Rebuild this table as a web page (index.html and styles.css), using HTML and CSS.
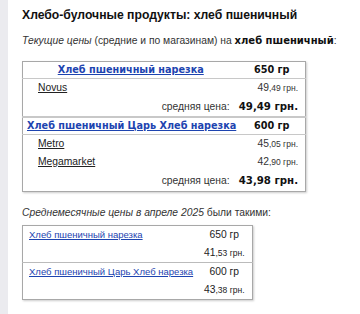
FILE: index.html
```html
<!DOCTYPE html>
<html lang="ru">
<head>
    <meta charset="UTF-8">
    <meta name="viewport" content="width=device-width, initial-scale=1.0">
    <title>Хлеб пшеничный — цены</title>
    <link rel="stylesheet" href="styles.css">
</head>
<body>
    <div class="page">
        <h2 class="title">Хлебо-булочные продукты: хлеб пшеничный</h2>

        <p class="lead lead-current"><i>Текущие цены</i> (средние и по магазинам) на <b>хлеб пшеничный</b>:</p>

        <!-- Current prices by store -->
        <table class="prices">
            <colgroup>
                <col class="col-name">
                <col class="col-value">
            </colgroup>
            <tr class="product">
                <td class="name"><a href="#">Хлеб пшеничный нарезка</a></td>
                <td class="weight">650 гр</td>
            </tr>
            <tr class="shop">
                <td class="shop-name"><a href="#">Novus</a></td>
                <td class="price">49<small>,49 грн.</small></td>
            </tr>
            <tr class="avg">
                <td class="avg-label">средняя цена:</td>
                <td class="avg-price">49,49 грн.</td>
            </tr>
            <tr class="product">
                <td class="name"><a href="#">Хлеб пшеничный Царь Хлеб нарезка</a></td>
                <td class="weight">600 гр</td>
            </tr>
            <tr class="shop">
                <td class="shop-name"><a href="#">Metro</a></td>
                <td class="price">45<small>,05 грн.</small></td>
            </tr>
            <tr class="shop">
                <td class="shop-name"><a href="#">Megamarket</a></td>
                <td class="price">42<small>,90 грн.</small></td>
            </tr>
            <tr class="avg">
                <td class="avg-label">средняя цена:</td>
                <td class="avg-price">43,98 грн.</td>
            </tr>
        </table>

        <p class="lead lead-monthly"><i>Среднемесячные цены в апреле 2025</i> были такими:</p>

        <!-- Monthly averages -->
        <table class="monthly">
            <colgroup>
                <col class="m-col-name">
                <col class="m-col-value">
            </colgroup>
            <tr>
                <td class="m-name"><a href="#">Хлеб пшеничный нарезка</a></td>
                <td class="m-value">650 гр<br>41<small>,53 грн.</small></td>
            </tr>
            <tr>
                <td class="m-name"><a href="#">Хлеб пшеничный Царь Хлеб нарезка</a></td>
                <td class="m-value">600 гр<br>43<small>,38 грн.</small></td>
            </tr>
        </table>
    </div>
</body>
</html>
```

FILE: styles.css
```css
body {
    margin: 0;
    background-color: #ebebef;
    font-family: "Liberation Sans", Arial, sans-serif;
    color: #222;
}
.page {
    margin-left: 8px;
    min-height: 314px;
    background-color: #fff;
    padding: 8px 14px 0 14px;
    box-sizing: border-box;
}
.title {
    font-size: 12.2px;
    font-weight: bold;
    margin: 0 0 11px 0;
    line-height: 15px;
    color: #111;
}
.lead {
    font-size: 10.3px;
    line-height: 14px;
    color: #333;
    white-space: nowrap;
}
.lead-current {
    margin: 0 0 13px 0;
}
.lead-monthly {
    margin: 0 0 5px 0;
}
.lead b {
    font-family: "DejaVu Sans", Verdana, sans-serif;
    font-size: 10px;
    color: #111;
}
a {
    color: #1d44b0;
}

/* current prices */
.prices {
    width: 284px;
    table-layout: fixed;
    border-collapse: collapse;
    border: 1px solid #a8a8a8;
    box-shadow: 1px 1px 2px #ccc;
    margin-bottom: 14px;
}
.col-value {
    width: 67px;
}
.prices td {
    padding: 3px 7px;
    line-height: 12px;
    font-size: 10.3px;
    white-space: nowrap;
}
.product td {
    border-bottom: 1px solid #c8c8c8;
    font-family: "DejaVu Sans", Verdana, sans-serif;
    font-weight: bold;
    font-size: 9.7px;
    padding-top: 2px;
    padding-bottom: 2px;
}
.product .name {
    text-align: center;
    padding-left: 4px;
    padding-right: 4px;
}
.product .weight {
    text-align: center;
    color: #111;
}
.shop-name {
    padding-left: 15px !important;
}
.shop-name a {
    color: #222;
}
.price {
    text-align: right;
    color: #333;
}
small {
    font-size: 8.5px;
}
.avg td {
    border-bottom: 2px solid #c8c8c8;
    padding-top: 4px;
    padding-bottom: 3px;
}
.avg:last-child td {
    border-bottom: none;
    padding-bottom: 4px;
}
.avg-label {
    text-align: right;
    color: #333;
    padding-right: 9px !important;
}
.prices .avg-price {
    font-family: "DejaVu Sans", Verdana, sans-serif;
    font-weight: bold;
    font-size: 10.2px;
    text-align: right;
    color: #111;
    padding-left: 0;
}

/* monthly averages */
.monthly {
    width: 231px;
    table-layout: fixed;
    border-collapse: collapse;
    border: 1px solid #a8a8a8;
    box-shadow: 1px 1px 2px #ccc;
}
.m-col-value {
    width: 56px;
}
.monthly td {
    font-size: 9.5px;
    line-height: 18px;
    padding: 0 4px 0 6px;
    vertical-align: top;
    white-space: nowrap;
}
.monthly tr + tr td {
    border-top: 1px solid #bbb;
}
.monthly .m-value {
    font-size: 10.3px;
    text-align: center;
    color: #222;
    padding: 0 2px;
}
```
